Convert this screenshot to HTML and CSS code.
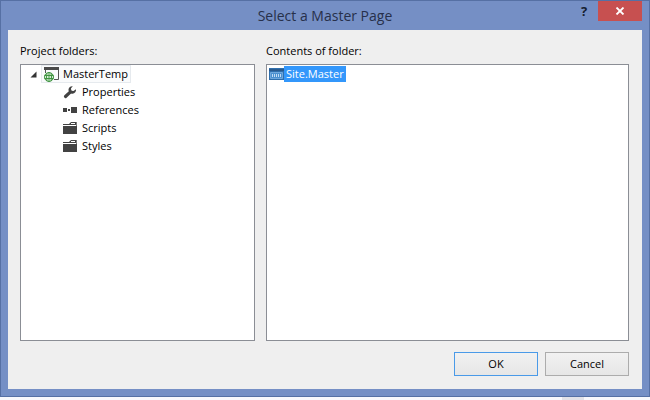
FILE: index.html
```html
<!DOCTYPE html>
<html lang="en">
<head>
    <meta charset="UTF-8">
    <meta name="viewport" content="width=device-width, initial-scale=1.0">
    <title>Select a Master Page</title>
    <link rel="stylesheet" href="styles.css">
</head>
<body>
    <div class="dialog" role="dialog" aria-labelledby="dialog-title">
        <!-- Title bar -->
        <header class="title-bar">
            <h1 id="dialog-title">Select a Master Page</h1>
            <div class="window-buttons">
                <button class="help" aria-label="Help">?</button>
                <button class="close" aria-label="Close">
                    <svg width="10" height="8" viewBox="0 0 10 8"><path d="M1.5 0.5L8.5 7.5M8.5 0.5L1.5 7.5" stroke="#fff" stroke-width="1.8"/></svg>
                </button>
            </div>
        </header>

        <div class="content">
            <div class="panels">
                <!-- Folder tree -->
                <section class="panel">
                    <h2 id="folders-label">Project folders:</h2>
                    <div class="box tree" aria-labelledby="folders-label">
                        <div class="root">
                            <button class="expander" aria-label="Collapse MasterTemp">
                                <svg width="7" height="7" viewBox="0 0 7 7"><path d="M6.5 0.5V6.5H0.5Z" fill="#333"/></svg>
                            </button>
                            <button class="item current">
                                <svg width="16" height="16" viewBox="0 0 16 16">
                                    <path d="M1 1H16V4H1Z" fill="#4a4a4a"/>
                                    <path d="M2.5 4V7M15.5 4V13.5H11" fill="none" stroke="#555"/>
                                    <circle cx="6" cy="11" r="4.5" fill="#e3f3e3" stroke="#3f9440"/>
                                    <path d="M1.5 9.5H10.5M1.5 12.5H10.5M6 6V16M4 7Q3 11 4 15M8 7Q9 11 8 15" fill="none" stroke="#3f9440"/>
                                </svg>
                                <span>MasterTemp</span>
                            </button>
                        </div>
                        <ul>
                            <li><button class="item">
                                <svg width="16" height="14" viewBox="0 0 16 14"><path d="M3.5 11.5L8.5 6.8" stroke="#424242" stroke-width="3.2" stroke-linecap="round"/><path d="M10.8 1.2A3.8 3.8 0 1 0 14 4.3L11.5 6L9.3 5.7L9 3.3Z" fill="#424242"/></svg>
                                <span>Properties</span>
                            </button></li>
                            <li><button class="item">
                                <svg width="16" height="14" viewBox="0 0 16 14"><path d="M1 5H5V9H1ZM6 6H8V8H6ZM9 4H15V10H9Z" fill="#424242"/></svg>
                                <span>References</span>
                            </button></li>
                            <li><button class="item">
                                <svg width="16" height="14" viewBox="0 0 16 14"><path d="M1 3H7L9 1H14V4H1ZM1 5H15V13H1Z" fill="#424242"/><path d="M9 2.5H13" stroke="#fff"/><path d="M14.5 1V5" stroke="#777"/></svg>
                                <span>Scripts</span>
                            </button></li>
                            <li><button class="item">
                                <svg width="16" height="14" viewBox="0 0 16 14"><path d="M1 3H7L9 1H14V4H1ZM1 5H15V13H1Z" fill="#424242"/><path d="M9 2.5H13" stroke="#fff"/><path d="M14.5 1V5" stroke="#777"/></svg>
                                <span>Styles</span>
                            </button></li>
                        </ul>
                    </div>
                </section>

                <!-- Files in the chosen folder -->
                <section class="panel">
                    <h2 id="contents-label">Contents of folder:</h2>
                    <div class="box files" aria-labelledby="contents-label">
                        <button class="file selected">
                            <svg width="15" height="12" viewBox="0 0 15 12">
                                <path d="M0 0H15V12H0Z" fill="#2f6fac"/>
                                <path d="M0 2H15" stroke="#285a8e" stroke-width="2"/>
                                <path d="M1.5 4.5H13.5V10.5H1.5Z" fill="#4b91d0" stroke="#6da7dc"/>
                                <path d="M3.5 6V9M5.5 6V9M7.5 6V9M9.5 6V9M11.5 6V9" stroke="#c2dcf3"/>
                            </svg>
                            <span>Site.Master</span>
                        </button>
                    </div>
                </section>
            </div>

            <footer class="actions">
                <button class="btn primary">OK</button>
                <button class="btn">Cancel</button>
            </footer>
        </div>
    </div>
    <div class="backdrop-mark"></div>
</body>
</html>
```

FILE: styles.css
```css
* {
    box-sizing: border-box;
}
body {
    margin: 0;
    height: 100vh;
    display: flex;
    flex-direction: column;
    background: #f8f8fc;
    color: #000;
    font-family: "Open Sans", "Noto Sans", sans-serif;
    font-size: 11px;
    line-height: 16px;
}
button {
    margin: 0;
    padding: 0;
    border: none;
    background: none;
    color: inherit;
    font: inherit;
}
svg {
    display: block;
    flex: none;
}
.dialog {
    flex: 1;
    display: flex;
    flex-direction: column;
    padding: 0 7px 7px;
    border: 1px solid #5670a4;
    background: #758fc5;
}
.title-bar {
    display: grid;
    grid-template-columns: 1fr auto 1fr;
    height: 29px;
}
.title-bar h1 {
    grid-column: 2;
    margin: 0;
    color: #27304a;
    font-size: 14px;
    font-weight: 400;
    line-height: 29px;
}
.window-buttons {
    display: flex;
    justify-content: flex-end;
    align-items: flex-start;
}
.help {
    width: 28px;
    height: 20px;
    color: #161d30;
    font-size: 13px;
    font-weight: 700;
}
.close {
    display: flex;
    align-items: center;
    justify-content: center;
    width: 44px;
    height: 20px;
    background: #c75050;
}
.content {
    flex: 1;
    display: flex;
    flex-direction: column;
    gap: 11px;
    padding: 13px 13px 13px 12px;
    background: #efefef;
}
.panels {
    flex: 1;
    display: grid;
    grid-template-columns: 235fr 363fr;
    gap: 11px;
}
.panel {
    display: flex;
    flex-direction: column;
    gap: 5px;
}
.panel h2 {
    margin: 0;
    font-size: 11px;
    font-weight: 400;
}
.box {
    flex: 1;
    border: 1px solid #8b8e95;
    background: #fff;
}
.root {
    display: flex;
    align-items: center;
    gap: 3px;
    padding-left: 9px;
}
.expander {
    display: flex;
    align-items: center;
    width: 8px;
    height: 18px;
}
.item {
    display: flex;
    align-items: center;
    gap: 4px;
    height: 18px;
    line-height: 18px;
}
.current {
    padding: 0 2px 0 1px;
    border: 1px solid #e6eaee;
    background: #fafbfc;
}
.tree ul {
    margin: 0;
    padding: 0 0 0 41px;
    list-style: none;
}
.files {
    padding: 1px 2px;
}
.file {
    display: flex;
    align-items: center;
}
.selected span {
    padding: 0 2px;
    background: #3397fb;
    color: #fff;
}
.actions {
    display: flex;
    justify-content: flex-end;
    gap: 7px;
}
.btn {
    width: 84px;
    height: 24px;
    border: 1px solid #acacac;
    background: linear-gradient(#f1f1f1, #e6e6e6);
}
.primary {
    border-color: #4a9ae8;
}
.backdrop-mark {
    align-self: flex-end;
    width: 22px;
    height: 3px;
    margin-right: 66px;
    background: #e2e2e8;
}
```
